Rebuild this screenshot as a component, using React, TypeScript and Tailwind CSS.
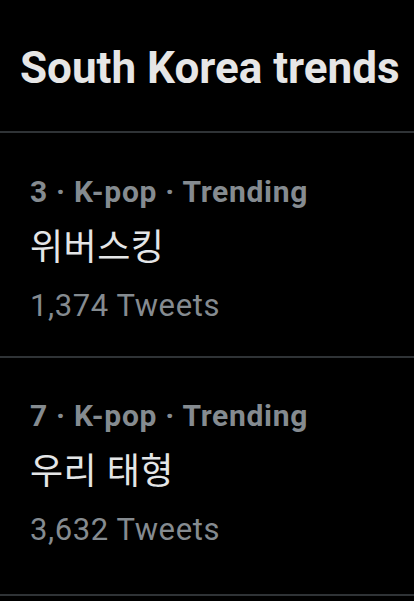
const trends = [
  { rank: 3, name: '위버스킹', tweets: '1,374', pad: 'pt-[41px] pb-[32px]' },
  { rank: 7, name: '우리 태형', tweets: '3,632', pad: 'pt-[40px] pb-[46px]' },
];

function TrendItem({ rank, name, tweets, pad }: { rank: number; name: string; tweets: string; pad: string }) {
  return (
    <div className={`border-b-2 border-[#2f3336] pl-[30px] ${pad}`}>
      <div className="text-[30px] font-bold leading-[36px] tracking-[0.7px] text-[#858b90]">
        {rank} · K-pop · Trending
      </div>
      <div className="mt-[16px] text-[36px] leading-[44px] tracking-[0.5px] text-[#e4e6e7]">{name}</div>
      <div className="mt-[18px] text-[31px] leading-[36px] tracking-[0.6px] text-[#858b90]">{tweets} Tweets</div>
    </div>
  );
}

export default function App() {
  return (
    <div
      className="h-[601px] w-[414px] overflow-hidden bg-black"
      style={{ fontFamily: 'Roboto, "Noto Sans CJK KR", sans-serif' }}
    >
      <div className="border-b-2 border-[#2f3336] pl-[20px] pt-[42px] pb-[37px]">
        <h1 className="text-[44px] font-bold leading-[52px] text-[#e6e6e6]">South Korea trends</h1>
      </div>
      {trends.map(t => (
        <TrendItem key={t.rank} {...t} />
      ))}
    </div>
  );
}
